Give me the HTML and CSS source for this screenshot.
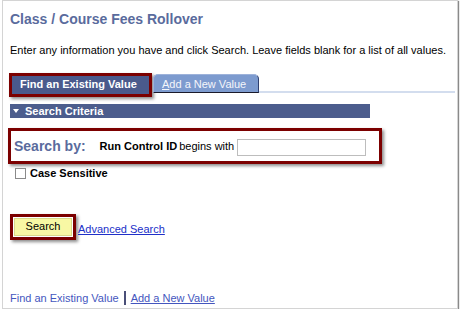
FILE: index.html
```html
<!DOCTYPE html>
<html lang="en">
<head>
    <meta charset="UTF-8">
    <meta name="viewport" content="width=device-width, initial-scale=1.0">
    <title>Class / Course Fees Rollover</title>
    <link rel="stylesheet" href="styles.css">
</head>
<body>
    <div class="page">
        <h1 class="title">Class / Course Fees Rollover</h1>
        <p class="intro">Enter any information you have and click Search. Leave fields blank for a list of all values.</p>

        <div class="tabs">
            <div class="mark tab-mark">
                <span class="tab-active">Find an Existing Value</span>
            </div>
            <span class="tab-other"><u>A</u>dd a New Value</span>
            <div class="tab-rule"></div>
        </div>

        <div class="criteria"><span class="tri"></span>Search Criteria</div>

        <div class="mark searchby">
            <span class="sb-label">Search by:</span>
            <b class="field">Run Control ID</b>
            <span class="op">begins with</span>
            <input type="text" class="sb-input">
        </div>

        <label class="case"><span class="cbox"></span>Case Sensitive</label>

        <div class="actions">
            <div class="mark btn-mark">
                <button class="btn">Search</button>
            </div>
            <a href="#" class="adv">Advanced Search</a>
        </div>

        <div class="footer">
            <a href="#" class="f-link">Find an Existing Value</a>
            <span class="sep"></span>
            <a href="#" class="f-link f-under">Add a New Value</a>
        </div>
    </div>
</body>
</html>
```

FILE: styles.css
```css
body{
    margin: 0;
    background: #fff;
    font-family: "Liberation Sans", Arial, sans-serif;
    font-size: 11px;
    color: #000;
}
.page{
    margin-left: 2px;
    width: 456px;
    height: 309px;
    border: 1px solid #d4d4d4;
    box-shadow: 1px 1px 1px #8a8a8a;
    padding-left: 7px;
    box-sizing: border-box;
    background: #fff;
}
.title{
    margin: 9px 0 0 0;
    font-size: 14px;
    line-height: 18px;
    color: #5a6b9d;
}
.intro{
    margin: 16px 0 0 0;
    line-height: 13px;
}

/* tabs */
.tabs{
    display: flex;
    margin-top: 16px;
    height: 24px;
}
.mark{
    border: 3px solid #7c0000;
    box-shadow: 2px 2px 3px rgba(0,0,0,0.45);
}
.tab-mark{
    margin-left: -1px;
    height: 24px;
    box-sizing: border-box;
    background: #fff;
}
.tab-active{
    display: block;
    width: 137px;
    height: 18px;
    line-height: 17px;
    padding-left: 8px;
    box-sizing: border-box;
    background: #4a5a8c;
    color: #fff;
    font-weight: bold;
}
.tab-other{
    align-self: flex-start;
    margin: 1px 0 0 1px;
    width: 106px;
    height: 19px;
    line-height: 18px;
    padding-left: 8px;
    box-sizing: border-box;
    background: #7d9bcf;
    color: #f4f6fb;
    border: 1px solid #9db2da;
    border-right-color: #2f3f6e;
    border-bottom-color: #1a1a2a;
    border-radius: 5px 5px 0 0;
}
.tab-other u{text-decoration: underline;}
.tab-rule{
    align-self: flex-start;
    margin-top: 18px;
    width: 196px;
    height: 2px;
    background: #d3ddee;
}

/* search criteria bar */
.criteria{
    margin-top: 7px;
    width: 360px;
    height: 14px;
    line-height: 14px;
    background: #4c5d8d;
    color: #fff;
    font-weight: bold;
    display: flex;
    align-items: center;
}
.tri{
    width: 0;
    height: 0;
    border-left: 3px solid transparent;
    border-right: 3px solid transparent;
    border-top: 4px solid #fff;
    margin: 0 6px 0 3px;
}

.searchby{
    margin: 10px 0 0 -2px;
    width: 374px;
    height: 36px;
    box-sizing: border-box;
    display: flex;
    align-items: center;
    padding-left: 3px;
}
.sb-label{
    font-size: 14px;
    font-weight: bold;
    color: #5a6b9d;
    margin-right: 14px;
}
.field{margin-right: 2px;}
.op{margin-right: 3px;}
.sb-input{
    width: 129px;
    height: 17px;
    box-sizing: border-box;
    border: 1px solid #bdbdbd;
    margin: 2px 0 0 0;
    padding: 0;
}

.case{
    display: flex;
    align-items: center;
    margin-top: 3px;
    font-weight: bold;
}
.cbox{
    width: 11px;
    height: 11px;
    box-sizing: border-box;
    border: 1px solid #8a8a8a;
    background: #fff;
    margin: 0 4px 0 5px;
}

.actions{
    display: flex;
    align-items: center;
    margin-top: 35px;
}
.btn-mark{
    width: 66px;
    height: 26px;
    box-sizing: border-box;
    padding: 1px;
    background: #fff;
}
.btn{
    display: block;
    width: 58px;
    height: 18px;
    border: 1px solid #d9d98a;
    background: #f8f8a4;
    font-family: "Liberation Sans", Arial, sans-serif;
    font-size: 11px;
    color: #000;
    padding: 0 0 2px 0;
}
.adv{
    margin: 4px 0 0 2px;
    color: #2030c8;
}

.footer{
    display: flex;
    align-items: center;
    margin-top: 51px;
}
.f-link{
    color: #4456be;
    text-decoration: none;
}
.f-under{text-decoration: underline;}
.sep{
    width: 2px;
    height: 14px;
    background: #4a4f78;
    margin: 0 5px;
}
```
